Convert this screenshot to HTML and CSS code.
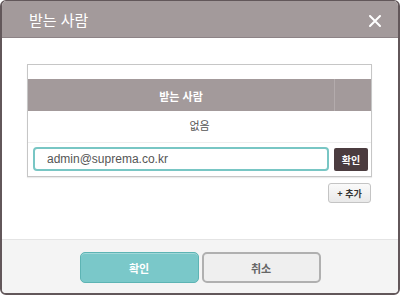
FILE: index.html
```html
<!DOCTYPE html>
<html lang="ko">
<head>
    <meta charset="UTF-8">
    <meta name="viewport" content="width=device-width, initial-scale=1.0">
    <title>받는 사람</title>
    <link rel="stylesheet" href="styles.css">
</head>
<body>

    <div class="dialog">
        <div class="dialog-header">
            <span class="dialog-title">받는 사람</span>
            <button class="close-btn" aria-label="닫기">
                <svg width="12" height="12" viewBox="0 0 12 12">
                    <path d="M1 1 L11 11 M11 1 L1 11" stroke="#ffffff" stroke-width="2" stroke-linecap="round"/>
                </svg>
            </button>
        </div>

        <div class="dialog-body">
            <div class="recipient-table">
                <div class="table-spacer"></div>
                <div class="table-head">
                    <div class="head-cell">받는 사람</div>
                    <div class="head-cell head-extra"></div>
                </div>
                <div class="table-row empty-row">없음</div>
                <div class="input-row">
                    <input type="text" class="email-input" value="admin@suprema.co.kr">
                    <button class="confirm-small">확인</button>
                </div>
            </div>
            <div class="add-line">
                <button class="add-btn">+ 추가</button>
            </div>
        </div>

        <div class="dialog-footer">
            <button class="footer-btn btn-ok">확인</button>
            <button class="footer-btn btn-cancel">취소</button>
        </div>
    </div>

</body>
</html>
```

FILE: styles.css
```css
* {
    box-sizing: border-box;
}
body {
    margin: 0;
    font-family: "Noto Sans", "Noto Sans CJK KR", sans-serif;
    background: #ffffff;
}
.dialog {
    width: 400px;
    height: 295px;
    display: flex;
    flex-direction: column;
    border: 2px solid #62575a;
    border-top-width: 1px;
    border-radius: 6px;
    overflow: hidden;
    background: #ffffff;
}
.dialog-header {
    height: 37px;
    background-color: #a39a9b;
    border-bottom: 1px solid #8d8386;
    display: flex;
    align-items: center;
    justify-content: space-between;
    padding: 0 16px 0 27px;
    flex-shrink: 0;
}
.dialog-title {
    color: #ffffff;
    font-size: 15px;
    font-family: "Noto Sans CJK KR", sans-serif;
}
.close-btn {
    background: none;
    border: none;
    padding: 0;
    width: 14px;
    height: 14px;
    display: flex;
    align-items: center;
    justify-content: center;
    cursor: pointer;
    margin-top: 3px;
}
.dialog-body {
    flex: 1;
    padding: 26px 26px 0 25px;
}
.recipient-table {
    border: 1px solid #c6c6c6;
    box-shadow: 0 1px 1px rgba(0, 0, 0, 0.08);
}
.table-spacer {
    height: 14px;
}
.table-head {
    display: flex;
    height: 32px;
    background-color: #a39a9b;
}
.head-cell {
    flex: 1;
    display: flex;
    align-items: center;
    justify-content: center;
    color: #ffffff;
    font-size: 11px;
    font-weight: bold;
    font-family: "Noto Sans CJK KR", sans-serif;
    padding-top: 1px;
}
.head-extra {
    flex: 0 0 37px;
    border-left: 1px solid #b3abac;
}
.empty-row {
    height: 32px;
    display: flex;
    align-items: center;
    justify-content: center;
    font-size: 11px;
    color: #555555;
    font-family: "Noto Sans CJK KR", sans-serif;
    border-bottom: 1px solid #eeeeee;
    padding-bottom: 3px;
}
.input-row {
    display: flex;
    align-items: center;
    gap: 5px;
    padding: 4px 3px 5px 5px;
}
.email-input {
    width: 296px;
    height: 24px;
    border: 2px solid #78c6c4;
    border-radius: 4px;
    padding: 0 12px;
    font-size: 12px;
    color: #555555;
    font-family: "Liberation Sans", sans-serif;
    outline: none;
}
.confirm-small {
    width: 34px;
    height: 23px;
    border: none;
    border-radius: 2px;
    background-color: #4b3c3f;
    color: #ffffff;
    font-size: 10px;
    font-weight: bold;
    font-family: "Noto Sans CJK KR", sans-serif;
    padding: 0;
}
.add-line {
    display: flex;
    justify-content: flex-end;
    padding-top: 6px;
}
.add-btn {
    width: 43px;
    height: 20px;
    border: 1px solid #c4c4c4;
    border-radius: 3px;
    background: linear-gradient(#fafafa, #e9e9e9);
    color: #333333;
    font-size: 9px;
    font-weight: bold;
    font-family: "Noto Sans CJK KR", sans-serif;
    padding: 0;
    margin-right: 1px;
}
.dialog-footer {
    height: 54px;
    flex-shrink: 0;
    background-color: #f4f4f4;
    border-top: 1px solid #e4e4e4;
    display: flex;
    justify-content: center;
    gap: 3px;
    padding-top: 12px;
}
.footer-btn {
    width: 119px;
    height: 31px;
    border-radius: 5px;
    font-size: 11px;
    font-weight: bold;
    font-family: "Noto Sans CJK KR", sans-serif;
    cursor: pointer;
}
.btn-ok {
    background-color: #7ac8c9;
    border: 1px solid #5db4b4;
    color: #ffffff;
    box-shadow: inset 0 1px 0 rgba(255, 255, 255, 0.3);
}
.btn-cancel {
    background-color: #efefef;
    border: 2px solid #b0b0b0;
    color: #666666;
}
```
